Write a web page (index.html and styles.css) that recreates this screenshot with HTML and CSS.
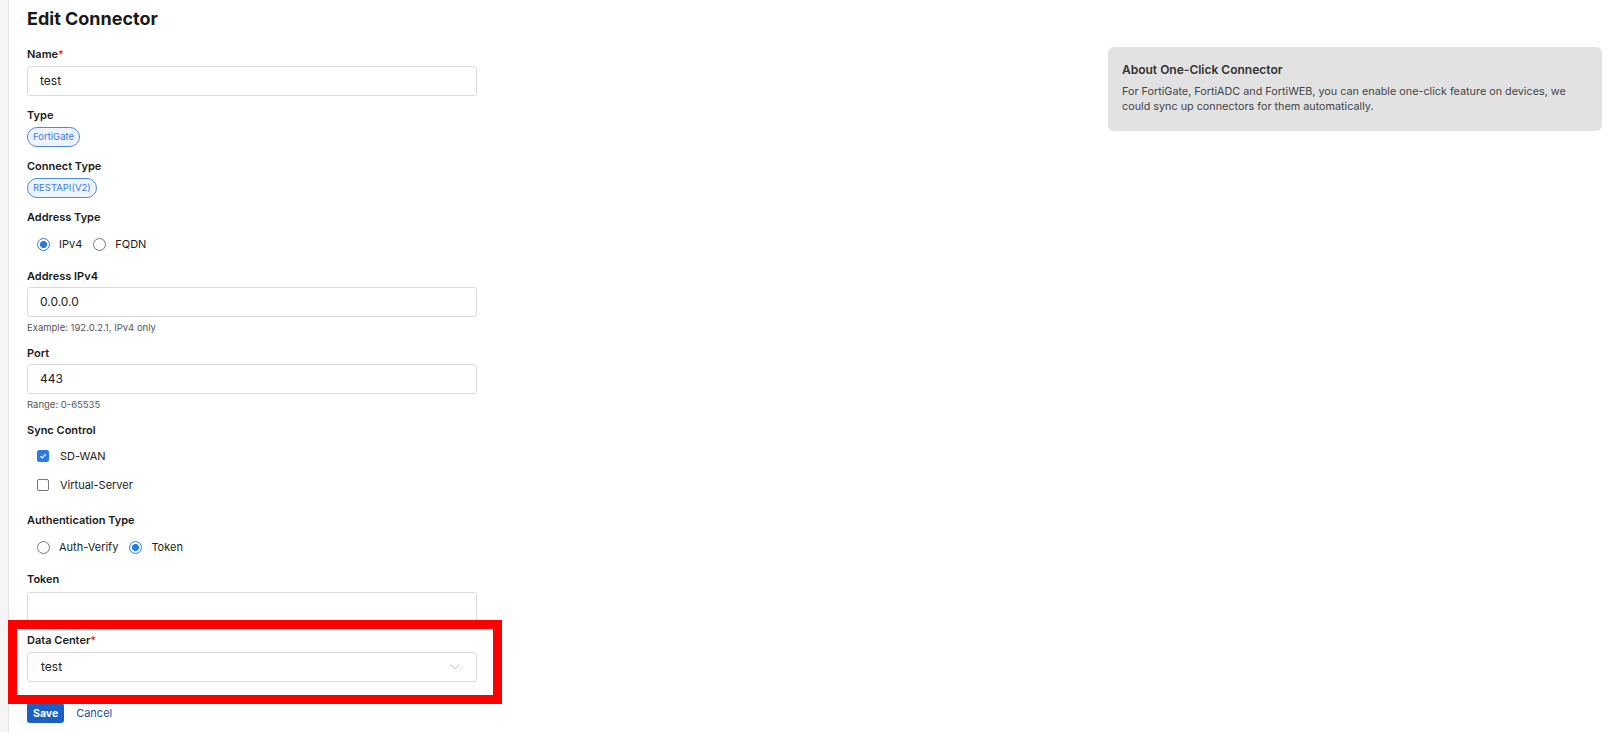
FILE: index.html
```html
<!DOCTYPE html>
<html>
<head>
<meta charset="utf-8">
<link rel="stylesheet" href="styles.css">
</head>
<body>
<div class="page">
  <div class="rail"></div>
  <main class="main">
    <section class="form">
      <h1 class="title">Edit Connector</h1>

      <div class="item">
        <label class="label">Name<span class="req">*</span></label>
        <div class="input">test</div>
      </div>

      <div class="item">
        <label class="label">Type</label>
        <span class="badge">FortiGate</span>
      </div>

      <div class="item">
        <label class="label">Connect Type</label>
        <span class="badge">RESTAPI(V2)</span>
      </div>

      <div class="item item-choice">
        <label class="label">Address Type</label>
        <div class="choices">
          <span class="choice"><span class="radio on"></span>IPv4</span>
          <span class="choice"><span class="radio"></span>FQDN</span>
        </div>
      </div>

      <div class="item item-help">
        <label class="label">Address IPv4</label>
        <div class="input">0.0.0.0</div>
        <div class="help">Example: 192.0.2.1, IPv4 only</div>
      </div>

      <div class="item item-help">
        <label class="label">Port</label>
        <div class="input">443</div>
        <div class="help">Range: 0-65535</div>
      </div>

      <div class="item item-checks">
        <label class="label">Sync Control</label>
        <div class="check-row"><span class="check on"><svg viewBox="0 0 12 12" width="12" height="12"><path d="M2.8 6.2 L5 8.3 L9.3 3.8" fill="none" stroke="#fff" stroke-width="1.5"/></svg></span>SD-WAN</div>
        <div class="check-row"><span class="check"></span>Virtual-Server</div>
      </div>

      <div class="item item-choice">
        <label class="label">Authentication Type</label>
        <div class="choices">
          <span class="choice"><span class="radio"></span>Auth-Verify</span>
          <span class="choice"><span class="radio on"></span>Token</span>
        </div>
      </div>

      <div class="item item-token">
        <label class="label">Token</label>
        <div class="input"></div>
      </div>

      <div class="item">
        <label class="label">Data Center<span class="req">*</span></label>
        <div class="input select">test
          <svg class="chev" viewBox="0 0 10 6" width="10" height="6"><path d="M0.5 0.5 L5 5 L9.5 0.5" fill="none" stroke="#c4c4c4" stroke-width="1"/></svg>
        </div>
      </div>

      <div class="actions">
        <button class="btn-save">Save</button>
        <a class="btn-cancel">Cancel</a>
      </div>
    </section>

    <aside class="about">
      <h2 class="about-title">About One-Click Connector</h2>
      <p class="about-text">For FortiGate, FortiADC and FortiWEB, you can enable one-click feature on devices, we could sync up connectors for them automatically.</p>
    </aside>
  </main>
  <div class="highlight"></div>
</div>
</body>
</html>
```

FILE: styles.css
```css
* { box-sizing: border-box; }
html, body { margin: 0; padding: 0; background: #fff; }
body {
  font-family: Inter, "Noto Sans", "Liberation Sans", sans-serif;
  color: #1b1b1b;
  width: 1611px;
  height: 732px;
  overflow: hidden;
}
.page {
  position: relative;
  display: flex;
  height: 732px;
}
.rail {
  width: 9px;
  flex: none;
  background: #f5f5f5;
  border-right: 1px solid #e4e4e4;
}
.main {
  flex: 1;
  display: flex;
  padding-left: 18px;
  padding-right: 9px;
}
.form {
  width: 450px;
  flex: none;
}
.title {
  margin: 8px 0 16px;
  font-size: 18px;
  line-height: 22px;
  font-weight: 700;
  color: #1a1a1a;
}
.item {
  display: flex;
  flex-direction: column;
  align-items: flex-start;
  margin-bottom: 11px;
}
.label {
  font-size: 11px;
  line-height: 16px;
  font-weight: 600;
  color: #1b1b1b;
  margin-bottom: 4px;
}
.req { color: #e0303a; }
.input {
  width: 450px;
  height: 30px;
  border: 1px solid #dcdcdc;
  border-radius: 3px;
  padding: 0 12px;
  font-size: 12px;
  line-height: 28px;
  color: #222;
}
.select {
  position: relative;
  display: flex;
  align-items: center;
  justify-content: space-between;
  padding: 0 13px;
}
.chev { margin-right: 3px; }
.badge {
  display: inline-block;
  height: 21px;
  line-height: 19px;
  padding: 0 5px;
  border: 1px solid #4b8ae2;
  border-radius: 11px;
  background: #eef4ff;
  color: #3d7ddb;
  font-size: 9.5px;
}
.item + .item .badge { height: 20px; line-height: 18px; }
.item-choice .label { margin-bottom: 9px; }
.item-choice { margin-bottom: 14px; }
.choices {
  display: flex;
  align-items: center;
  height: 20px;
  padding-left: 10px;
  gap: 11px;
}
.choice {
  display: flex;
  align-items: center;
  font-size: 11px;
  color: #222;
}
.radio {
  width: 13px;
  height: 13px;
  border-radius: 50%;
  border: 1px solid #767676;
  margin-right: 9px;
  flex: none;
  background: #fff;
}
.radio.on {
  border-color: #2c7be0;
  background: radial-gradient(circle, #2c7be0 0 3.3px, #fff 3.8px);
}
.item-help { margin-bottom: 10px; }
.item-help .label { margin-bottom: 3px; }
.help {
  font-size: 9.5px;
  line-height: 14px;
  color: #555;
  margin-top: 4px;
}
.item-checks { margin-bottom: 13px; }
.item-checks .label { margin-bottom: 3px; }
.check-row {
  display: flex;
  align-items: center;
  height: 29px;
  padding-left: 10px;
  font-size: 11px;
  color: #222;
}
.check {
  width: 12px;
  height: 12px;
  border: 1px solid #777;
  border-radius: 2px;
  margin-right: 11px;
  background: #fff;
  display: flex;
  align-items: center;
  justify-content: center;
}
.check.on {
  background: #2c7be0;
  border-color: #2c7be0;
}
.check svg { display: block; }
.item-token .label { margin-bottom: 5px; }
.item-token { margin-bottom: 10px; }
.actions {
  display: flex;
  align-items: center;
  gap: 12px;
  margin-top: 21px;
}
.btn-save {
  height: 20px;
  padding: 0 6px;
  border: none;
  border-radius: 3px;
  background: #1b5fc2;
  color: #fff;
  font-family: inherit;
  font-size: 10.5px;
  font-weight: 700;
}
.btn-cancel {
  font-size: 11px;
  color: #1f4f9e;
}
.about {
  margin-left: auto;
  margin-top: 47px;
  width: 494px;
  height: 84px;
  background: #e2e2e2;
  border-radius: 6px;
  padding: 15px 20px 15px 14px;
}
.about-title {
  margin: 0 0 6px;
  font-size: 12px;
  line-height: 16px;
  font-weight: 600;
  color: #333;
}
.about-text {
  margin: 0;
  font-size: 10.8px;
  line-height: 15px;
  color: #444;
}
.highlight {
  position: absolute;
  left: 8px;
  top: 620px;
  width: 494px;
  height: 84px;
  border: 9px solid #ff0000;
  pointer-events: none;
}
```
